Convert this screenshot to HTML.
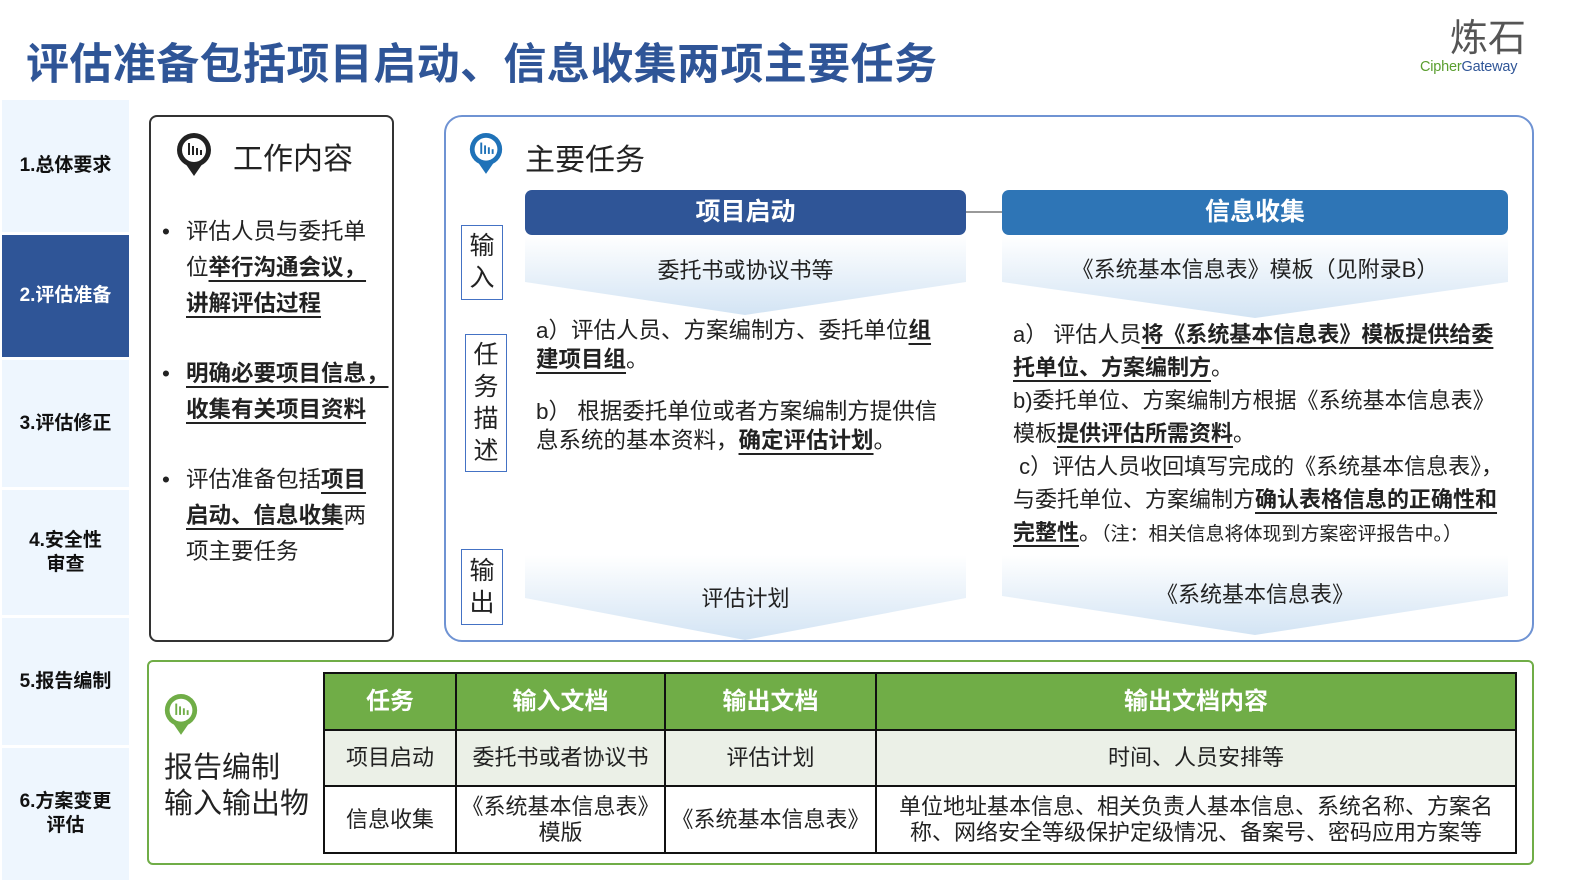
<!DOCTYPE html>
<html><head><meta charset="utf-8"><style>
*{margin:0;padding:0;box-sizing:border-box}
body{width:1587px;height:892px;background:#fff;position:relative;overflow:hidden;font-family:"Liberation Sans","Noto Sans CJK SC",sans-serif;color:#222}
.a{position:absolute}
.title{left:26px;top:30px;font-size:43px;font-weight:bold;color:#2f5597;letter-spacing:0.4px;white-space:nowrap}
.side{left:2px;width:127px;display:flex;align-items:center;justify-content:center;text-align:center;font-weight:bold;font-size:19px;background:#eef6fe;color:#111;line-height:24px}
.side.on{background:#2f5597;color:#fff}
.u{text-decoration:underline;text-decoration-thickness:1.5px;text-underline-offset:5px;font-weight:bold}
.vbox{border:1.5px solid #4472c4;font-size:25px;text-align:center;line-height:32px;background:#fff;color:#222}
.nw{white-space:nowrap}
table{border-collapse:collapse;position:absolute;left:323px;top:672px;width:1194px}
td,th{border:2px solid #111;text-align:center;font-size:22px;line-height:26px}
th{background:#70ad47;color:#fff;height:57px;font-size:24px}
</style></head><body>
<div class="a title">评估准备包括项目启动、信息收集两项主要任务</div>
<div class="a" style="left:1400px;top:16px;width:126px;text-align:right;font-size:38px;color:#555;line-height:46px">炼石</div>
<div class="a" style="left:1420px;top:59px;font-size:14.5px;white-space:nowrap;letter-spacing:-0.2px"><span style="color:#5a9e2f">Cipher</span><span style="color:#2f5597">Gateway</span></div>

<div class="a side" style="top:100px;height:132px">1.总体要求</div>
<div class="a side on" style="top:235px;height:122px">2.评估准备</div>
<div class="a side" style="top:360px;height:127px">3.评估修正</div>
<div class="a side" style="top:490px;height:125px">4.安全性<br>审查</div>
<div class="a side" style="top:618px;height:127px">5.报告编制</div>
<div class="a side" style="top:748px;height:132px">6.方案变更<br>评估</div>

<div class="a" style="left:149px;top:115px;width:245px;height:527px;border:2px solid #333;border-radius:8px"></div>
<svg class="a" style="left:174px;top:131px" width="40" height="46" viewBox="0 0 40 46"><circle cx="20" cy="19" r="17" fill="#222"/><path d="M11 32 L20 45 L29 32Z" fill="#222"/><circle cx="20" cy="19" r="12" fill="#fff"/><rect x="14" y="12" width="2" height="12" fill="#222"/><rect x="18" y="15" width="2" height="9" fill="#222"/><rect x="22" y="17" width="2" height="7" fill="#222"/><rect x="26" y="19" width="2" height="5" fill="#222"/></svg>
<div class="a" style="left:233px;top:134px;font-size:30px;color:#222">工作内容</div>
<div class="a nw" style="left:160px;top:214px;width:230px;font-size:22.5px;line-height:36px">
<div style="padding-left:26px;position:relative"><span style="position:absolute;left:2px">•</span>评估人员与委托单<br>位<span class="u">举行沟通会议，<br>讲解评估过程</span></div>
<div style="padding-left:26px;position:relative;margin-top:34px"><span style="position:absolute;left:2px">•</span><span class="u">明确必要项目信息，<br>收集有关项目资料</span></div>
<div style="padding-left:26px;position:relative;margin-top:34px"><span style="position:absolute;left:2px">•</span>评估准备包括<span class="u">项目<br>启动、信息收集</span>两<br>项主要任务</div>
</div>

<div class="a" style="left:444px;top:115px;width:1090px;height:527px;border:2px solid #6f93d3;border-radius:18px"></div>
<svg class="a" style="left:467px;top:130px" width="38" height="46" viewBox="0 0 40 46"><circle cx="20" cy="19" r="17" fill="#1f72b8"/><path d="M11 32 L20 45 L29 32Z" fill="#1f72b8"/><circle cx="20" cy="19" r="12" fill="#fff"/><rect x="14" y="12" width="2" height="12" fill="#1f72b8"/><rect x="18" y="15" width="2" height="9" fill="#1f72b8"/><rect x="22" y="17" width="2" height="7" fill="#1f72b8"/><rect x="26" y="19" width="2" height="5" fill="#1f72b8"/></svg>
<div class="a" style="left:525px;top:135px;font-size:30px;color:#222">主要任务</div>

<svg class="a" style="left:0;top:0" width="1587" height="892">
<defs><linearGradient id="g" x1="0" y1="0" x2="0" y2="1"><stop offset="0" stop-color="#fff"/><stop offset="1" stop-color="#d3e4f4"/></linearGradient></defs>
<polygon points="525,235 966,235 966,282 745,315 525,282" fill="url(#g)"/>
<polygon points="1002,235 1508,235 1508,282 1255,318 1002,282" fill="url(#g)"/>
<polygon points="525,555 966,555 966,598 745,640 525,598" fill="url(#g)"/>
<polygon points="1002,555 1508,555 1508,596 1255,635 1002,596" fill="url(#g)"/>
<line x1="966" y1="212" x2="1002" y2="212" stroke="#999" stroke-width="2"/>
</svg>
<div class="a" style="left:525px;top:190px;width:441px;height:45px;background:#2f5597;border-radius:7px;color:#fff;font-weight:bold;font-size:25px;text-align:center;line-height:45px">项目启动</div>
<div class="a" style="left:1002px;top:190px;width:506px;height:45px;background:#2e75b6;border-radius:7px;color:#fff;font-weight:bold;font-size:25px;text-align:center;line-height:45px">信息收集</div>
<div class="a" style="left:525px;top:253px;width:441px;text-align:center;font-size:22px">委托书或协议书等</div>
<div class="a" style="left:1002px;top:252px;width:506px;text-align:center;font-size:22px">《系统基本信息表》模板（见附录B）</div>
<div class="a" style="left:525px;top:581px;width:441px;text-align:center;font-size:22px">评估计划</div>
<div class="a" style="left:1002px;top:577px;width:506px;text-align:center;font-size:22px">《系统基本信息表》</div>

<div class="a vbox" style="left:461px;top:225px;width:42px;height:75px;padding-top:4px">输<br>入</div>
<div class="a vbox" style="left:465px;top:334px;width:42px;height:138px;padding-top:4px">任<br>务<br>描<br>述</div>
<div class="a vbox" style="left:461px;top:549px;width:42px;height:76px;padding-top:5px">输<br>出</div>

<div class="a nw" style="left:536px;top:316px;font-size:22.5px;line-height:29px">a）评估人员、方案编制方、委托单位<span class="u">组<br>建项目组</span>。</div>
<div class="a nw" style="left:536px;top:397px;font-size:22.5px;line-height:29px">b）&nbsp;根据委托单位或者方案编制方提供信<br>息系统的基本资料，<span class="u">确定评估计划</span>。</div>
<div class="a nw" style="left:1013px;top:318px;font-size:22px;line-height:33px">a）&nbsp;评估人员<span class="u">将《系统基本信息表》模板提供给委<br>托单位、方案编制方</span>。<br>b)委托单位、方案编制方根据《系统基本信息表》<br>模板<span class="u">提供评估所需资料</span>。<br>&nbsp;c）评估人员收回填写完成的《系统基本信息表》，<br>与委托单位、方案编制方<span class="u">确认表格信息的正确性和<br>完整性</span>。<span style="font-size:19px">（注：相关信息将体现到方案密评报告中。）</span></div>

<div class="a" style="left:147px;top:660px;width:1387px;height:205px;border:2px solid #70ad47;border-radius:6px"></div>
<svg class="a" style="left:162px;top:692px" width="38" height="44" viewBox="0 0 40 46"><circle cx="20" cy="19" r="17" fill="#70ad47"/><path d="M11 32 L20 45 L29 32Z" fill="#70ad47"/><circle cx="20" cy="19" r="12" fill="#fff"/><rect x="14" y="12" width="2" height="12" fill="#70ad47"/><rect x="18" y="15" width="2" height="9" fill="#70ad47"/><rect x="22" y="17" width="2" height="7" fill="#70ad47"/><rect x="26" y="19" width="2" height="5" fill="#70ad47"/></svg>
<div class="a" style="left:164px;top:750px;font-size:29px;line-height:36px;color:#222">报告编制<br>输入输出物</div>
<table>
<tr><th style="width:132px">任务</th><th style="width:209px">输入文档</th><th style="width:211px">输出文档</th><th>输出文档内容</th></tr>
<tr style="background:#ebf0e7;height:56px"><td>项目启动</td><td>委托书或者协议书</td><td>评估计划</td><td>时间、人员安排等</td></tr>
<tr style="height:67px"><td>信息收集</td><td>《系统基本信息表》<br>模版</td><td>《系统基本信息表》</td><td style="padding:0 8px">单位地址基本信息、相关负责人基本信息、系统名称、方案名<br>称、网络安全等级保护定级情况、备案号、密码应用方案等</td></tr>
</table>
</body></html>
